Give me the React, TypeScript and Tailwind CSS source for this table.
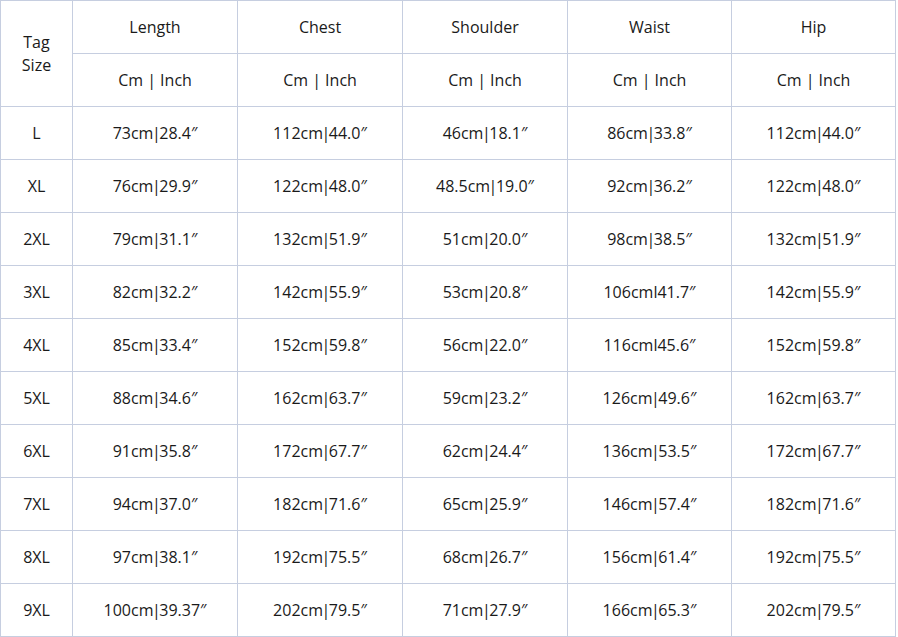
import React from "react";

const heads = ["Length", "Chest", "Shoulder", "Waist", "Hip"];
const rows: string[][] = [
  ["L", "73cm|28.4″", "112cm|44.0″", "46cm|18.1″", "86cm|33.8″", "112cm|44.0″"],
  ["XL", "76cm|29.9″", "122cm|48.0″", "48.5cm|19.0″", "92cm|36.2″", "122cm|48.0″"],
  ["2XL", "79cm|31.1″", "132cm|51.9″", "51cm|20.0″", "98cm|38.5″", "132cm|51.9″"],
  ["3XL", "82cm|32.2″", "142cm|55.9″", "53cm|20.8″", "106cml41.7″", "142cm|55.9″"],
  ["4XL", "85cm|33.4″", "152cm|59.8″", "56cm|22.0″", "116cml45.6″", "152cm|59.8″"],
  ["5XL", "88cm|34.6″", "162cm|63.7″", "59cm|23.2″", "126cm|49.6″", "162cm|63.7″"],
  ["6XL", "91cm|35.8″", "172cm|67.7″", "62cm|24.4″", "136cm|53.5″", "172cm|67.7″"],
  ["7XL", "94cm|37.0″", "182cm|71.6″", "65cm|25.9″", "146cm|57.4″", "182cm|71.6″"],
  ["8XL", "97cm|38.1″", "192cm|75.5″", "68cm|26.7″", "156cm|61.4″", "192cm|75.5″"],
  ["9XL", "100cm|39.37″", "202cm|79.5″", "71cm|27.9″", "166cm|65.3″", "202cm|79.5″"],
];

function Cell({ text }: { text: string }) {
  const parts = text.split("|");
  if (parts.length === 1) return <>{text}</>;
  return (
    <>
      {parts[0]}
      <span className="mx-[-1.5px]">|</span>
      {parts[1]}
    </>
  );
}

export default function App() {
  return (
    <div className="w-[898px] h-[637px] bg-white">
      <div
        className="grid w-[896px] gap-px bg-[#c6cee0] p-px text-[16px] text-[#1a1a1a] grid-cols-[71px_164px_164px_164px_163px_163px] auto-rows-[52px]"
        style={{ fontFamily: '"Open Sans", "Noto Sans", sans-serif' }}
      >
        <div className="row-span-2 bg-white flex items-center justify-center text-center leading-[23px]">
          Tag
          <br />
          Size
        </div>
        {heads.map((h) => (
          <div key={h} className="bg-white flex items-center justify-center pb-[1px]">
            {h}
          </div>
        ))}
        {heads.map((h) => (
          <div key={h + "u"} className="bg-white flex items-center justify-center">
            Cm | Inch
          </div>
        ))}
        {rows.map((r) =>
          r.map((c, i) => (
            <div key={r[0] + i} className="bg-white flex items-center justify-center">
              <Cell text={c} />
            </div>
          ))
        )}
      </div>
    </div>
  );
}
